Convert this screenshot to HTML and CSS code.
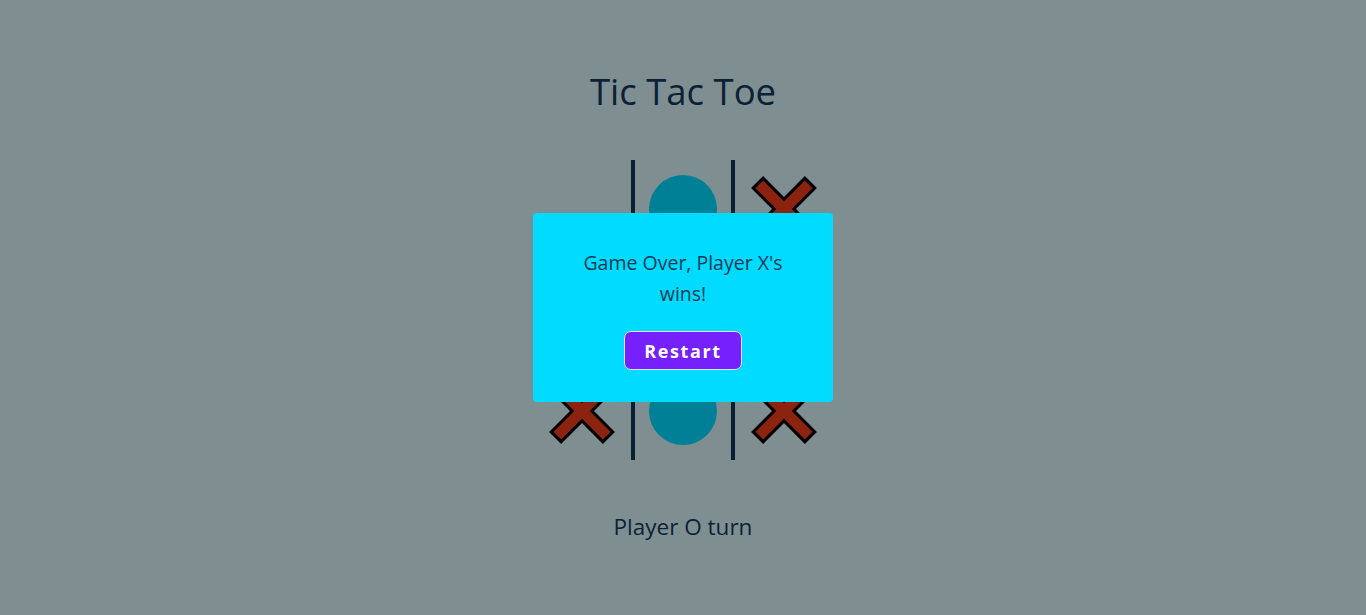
FILE: index.html
```html
<!DOCTYPE html>
<html>
<head>
<meta charset="utf-8">
<title>Tic Tac Toe</title>
<link rel="stylesheet" href="styles.css">
</head>
<body>
<main class="game">
  <h1 class="title">Tic Tac Toe</h1>
  <div class="board-wrap">
    <div class="board">
      <div class="cell"></div>
      <div class="cell"><span class="o"></span></div>
      <div class="cell">
        <svg class="x" viewBox="0 0 66 66" width="66" height="66">
          <g stroke="#000" stroke-width="17"><line x1="6.1" y1="6.1" x2="59.9" y2="59.9"/><line x1="59.9" y1="6.1" x2="6.1" y2="59.9"/></g>
          <g stroke="#8b2310" stroke-width="11"><line x1="8.3" y1="8.3" x2="57.7" y2="57.7"/><line x1="57.7" y1="8.3" x2="8.3" y2="57.7"/></g>
        </svg>
      </div>
      <div class="cell"></div>
      <div class="cell"></div>
      <div class="cell"></div>
      <div class="cell">
        <svg class="x" viewBox="0 0 66 66" width="66" height="66">
          <g stroke="#000" stroke-width="17"><line x1="6.1" y1="6.1" x2="59.9" y2="59.9"/><line x1="59.9" y1="6.1" x2="6.1" y2="59.9"/></g>
          <g stroke="#8b2310" stroke-width="11"><line x1="8.3" y1="8.3" x2="57.7" y2="57.7"/><line x1="57.7" y1="8.3" x2="8.3" y2="57.7"/></g>
        </svg>
      </div>
      <div class="cell"><span class="o"></span></div>
      <div class="cell">
        <svg class="x" viewBox="0 0 66 66" width="66" height="66">
          <g stroke="#000" stroke-width="17"><line x1="6.1" y1="6.1" x2="59.9" y2="59.9"/><line x1="59.9" y1="6.1" x2="6.1" y2="59.9"/></g>
          <g stroke="#8b2310" stroke-width="11"><line x1="8.3" y1="8.3" x2="57.7" y2="57.7"/><line x1="57.7" y1="8.3" x2="8.3" y2="57.7"/></g>
        </svg>
      </div>
    </div>
    <div class="modal">
      <p class="modal-text">Game Over, Player X's wins!</p>
      <button class="restart">Restart</button>
    </div>
  </div>
  <p class="status">Player O turn</p>
</main>
</body>
</html>
```
FILE: styles.css
```css
html, body {
  margin: 0;
  padding: 0;
}
body {
  background: #7f8f91;
  font-family: "Open Sans", "Noto Sans", sans-serif;
  color: #0b2236;
  height: 615px;
  overflow: hidden;
}
.game {
  display: flex;
  flex-direction: column;
  align-items: center;
  padding-top: 64px;
}
.title {
  margin: 0;
  font-weight: 400;
  font-size: 36.5px;
  line-height: 54px;
  color: #0b2236;
}
.board-wrap {
  position: relative;
  margin-top: 42px;
  width: 300px;
  height: 300px;
}
.board {
  display: grid;
  grid-template-columns: 98px 96px 98px;
  grid-template-rows: 98px 96px 98px;
  gap: 4px;
  background: #0b1f33;
  width: 300px;
  height: 300px;
}
.cell {
  background: #7f8f91;
  display: flex;
  align-items: center;
  justify-content: center;
}
.o {
  width: 68px;
  height: 68px;
  border-radius: 50%;
  background: #008096;
}
.x {
  display: block;
  overflow: visible;
}
.modal {
  position: absolute;
  left: 0;
  top: 53px;
  width: 300px;
  height: 189px;
  box-sizing: border-box;
  background: #00dbff;
  border-radius: 4px;
  padding: 34px 40px 0;
  display: flex;
  flex-direction: column;
  align-items: center;
}
.modal-text {
  margin: 0;
  text-align: center;
  font-size: 19.5px;
  line-height: 31px;
  color: #0d3a55;
}
.restart {
  margin-top: 22px;
  width: 118px;
  height: 39px;
  background: #7520fd;
  border: 1px solid #e9e0ff;
  border-radius: 7px;
  color: #fff;
  font-family: "Open Sans", "Noto Sans", sans-serif;
  font-weight: 700;
  font-size: 18px;
  letter-spacing: 1.6px;
  padding: 0;
  cursor: pointer;
}
.status {
  margin: 52px 0 0;
  font-size: 22.5px;
  line-height: 30px;
  color: #0b2236;
}
```
